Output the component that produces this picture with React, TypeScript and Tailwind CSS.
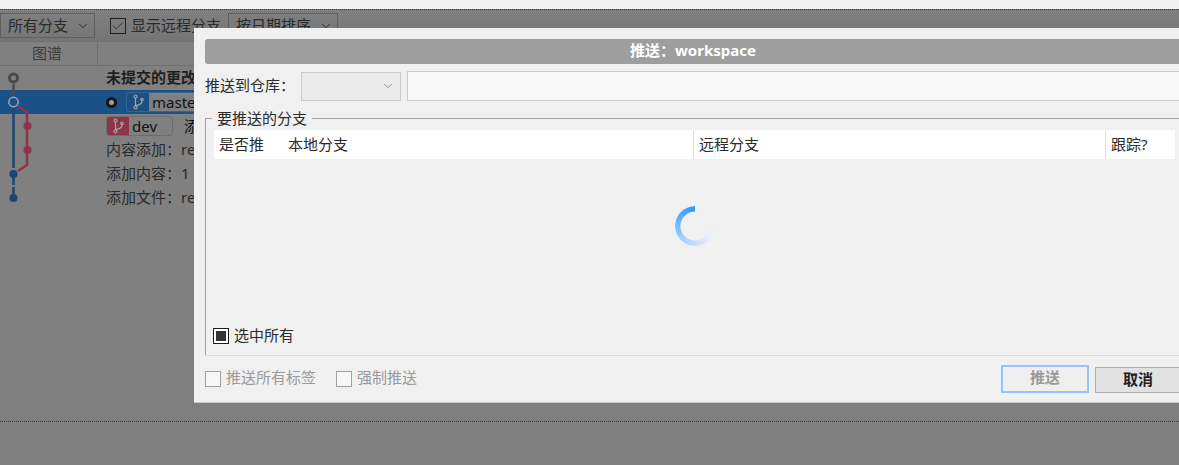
import { Check, ChevronDown } from 'lucide-react';

const font = 'font-["Noto_Sans","Noto_Sans_CJK_SC",sans-serif]';

const BranchIcon = () => (
  <svg width="14" height="16" viewBox="0 0 14 16" fill="none" stroke="#a8a8a8" strokeWidth="1.2">
    <circle cx="4.5" cy="2.5" r="1.5" />
    <circle cx="4.5" cy="13.5" r="1.5" />
    <circle cx="11" cy="5.5" r="1.2" />
    <path d="M4.5 4V12M5 11.5C9 11 11 9.5 11 6.8" />
  </svg>
);

const Graph = () => (
  <svg width="40" height="144" viewBox="0 0 40 144" fill="none" className="shrink-0">
    <path d="M13.5 18V30" stroke="#4d4d4d" strokeWidth="2.5" />
    <path d="M13.5 42V102" stroke="#1a4670" strokeWidth="2.5" />
    <path d="M13.5 112V128" stroke="#1a4670" strokeWidth="2.5" strokeDasharray="7 2" />
    <path d="M18 40L27 46V99L18 105" stroke="#8f3349" strokeWidth="2.5" />
    <circle cx="13.5" cy="12" r="4" stroke="#4a4a4a" strokeWidth="3" fill="#808080" />
    <circle cx="13.5" cy="36" r="4.7" stroke="#a9a9a9" strokeWidth="1.5" fill="#1a5186" />
    <circle cx="27.5" cy="60" r="4" fill="#8f3349" />
    <circle cx="27.5" cy="84" r="4" fill="#8f3349" />
    <circle cx="13.5" cy="108" r="4" fill="#1a4670" />
    <circle cx="13.5" cy="132" r="4" fill="#1a4670" />
  </svg>
);

const Background = () => (
  <div className="flex flex-col h-full">
    <div className="h-[9px] bg-[#f2f2f2] shrink-0" />
    <div className="h-[32px] shrink-0 flex items-center border-t border-dotted border-[#3f3f3f] bg-gradient-to-b from-[#808080] to-[#757575] text-[#2a2a2a] text-[15px]">
      <div className="w-[95px] h-[25px] border border-[#5f5f5f] flex items-center pl-[7px] gap-[8px] whitespace-nowrap">
        所有分支
        <ChevronDown size={14} strokeWidth={1.6} />
      </div>
      <div className="ml-[15px] w-[16px] h-[16px] border border-[#1f1f1f] flex items-center justify-center">
        <Check size={14} strokeWidth={1.4} />
      </div>
      <span className="ml-[5px] whitespace-nowrap">显示远程分支</span>
      <div className="ml-[7px] w-[110px] h-[25px] border border-[#5f5f5f] flex items-center pl-[7px] gap-[8px] whitespace-nowrap">
        按日期排序
        <ChevronDown size={14} strokeWidth={1.6} />
      </div>
    </div>
    <div className="h-[25px] shrink-0 border-t border-b border-[#707070] flex text-[15px] text-[#3c3c3c]">
      <div className="w-[98px] border-r border-[#707070] flex items-center justify-center pr-[3px]">图谱</div>
    </div>
    <div className="relative h-[144px] shrink-0 text-[15px] text-[#2a2a2a]">
      <div className="absolute left-0 right-0 top-[24px] h-[24px] bg-[#1a5186]" />
      <div className="absolute left-0 top-0">
        <Graph />
      </div>
      <div className="relative pl-[106px] flex flex-col">
        <div className="h-[24px] flex items-center pb-[1px] font-bold text-[#1e1e1e] whitespace-nowrap">未提交的更改</div>
        <div className="h-[24px] flex items-center text-[#101010]">
          <span className="w-[11px] h-[11px] rounded-full border-[3px] border-[#161616] bg-[#a0a0a0]" />
          <span className="ml-[9px] w-[200px] h-[20px] flex items-center rounded-[3px] border border-[#356495] bg-[#808080]">
            <span className="w-[22px] h-[18px] bg-[#1d4f80] flex items-center justify-center rounded-l-[2px]">
              <BranchIcon />
            </span>
            <span className="ml-[3px]">master</span>
          </span>
        </div>
        <div className="h-[24px] flex items-center text-[#101010]">
          <span className="w-[67px] h-[20px] flex items-center rounded-[3px] border border-[#6d6d6d] bg-[#808080]">
            <span className="w-[22px] h-[18px] bg-[#8f3349] flex items-center justify-center rounded-l-[2px]">
              <BranchIcon />
            </span>
            <span className="ml-[3px]">dev</span>
          </span>
          <span className="ml-[11px]">添</span>
        </div>
        <div className="h-[24px] flex items-center pb-[2px] whitespace-nowrap">内容添加：re</div>
        <div className="h-[24px] flex items-center pb-[2px] whitespace-nowrap">添加内容：1</div>
        <div className="h-[24px] flex items-center pb-[2px] whitespace-nowrap">添加文件：re</div>
      </div>
    </div>
    <div className="mt-[211px] shrink-0 border-t border-dotted border-[#3f3f3f]" />
  </div>
);

const Spinner = () => (
  <div className="w-[40px] h-[40px] rounded-full bg-[conic-gradient(from_20deg,#f0f0f0_0deg,#f0f0f0_70deg,#e4eefb_110deg,#a9d2fb_200deg,#5caefc_280deg,#2f95fb_340deg,#f0f0f0_341deg)] [mask:radial-gradient(circle,transparent_14px,black_15px)]" />
);

const Dialog = () => (
  <div className="absolute left-[194px] top-[28px] w-[998px] h-[375px] bg-[#f0f0f0] border-b border-[#c8c8c8] flex flex-col px-[11px] pt-[11px] text-[15px] text-[#2b2b2b]">
    <div className="h-[25px] shrink-0 bg-[#9e9e9e] rounded-[3px] flex items-center justify-center text-white font-bold pb-[2px]">
      推送：workspace
    </div>
    <div className="h-[30px] mt-[7px] shrink-0 flex items-center">
      <span className="w-[96px] pb-[2px] whitespace-nowrap">推送到仓库：</span>
      <div className="w-[100px] h-[29px] border border-[#cbcbcb] bg-[#ebebeb] flex items-center justify-end pr-[5px]">
        <ChevronDown size={14} strokeWidth={1.6} className="text-[#8a8a8a]" />
      </div>
      <div className="ml-[6px] flex-1 h-[30px] border-y border-l border-[#cbcbcb] bg-[#f8f8f8]" />
    </div>
    <div className="relative mt-[17px] h-[237px] shrink-0 border-t border-l border-[#a3a3a3] flex flex-col pl-[8px] pt-[11px]">
      <span className="absolute left-[6px] top-[-11px] px-[5px] bg-[#f0f0f0] leading-[20px] whitespace-nowrap">要推送的分支</span>
      <div className="h-[29px] w-[961px] shrink-0 bg-white flex items-center">
        <span className="w-[74px] pl-[5px] pb-[1px] whitespace-nowrap">是否推</span>
        <span className="w-[405px] pb-[1px]">本地分支</span>
        <span className="w-[412px] h-full flex items-center pl-[5px] pb-[1px] border-l border-[#e0e0e0]">远程分支</span>
        <span className="flex-1 h-full flex items-center pl-[5px] pb-[1px] border-l border-[#e0e0e0]">跟踪?</span>
      </div>
      <div className="flex-1 flex items-center justify-center w-[961px] pb-[63px]">
        <Spinner />
      </div>
      <div className="absolute left-[7px] top-[205px] flex items-center gap-[5px]">
        <span className="w-[16px] h-[16px] border border-[#1c1c1c] bg-white flex items-center justify-center">
          <span className="w-[10px] h-[10px] bg-[#333333]" />
        </span>
        <span className="pb-[1px]">选中所有</span>
      </div>
    </div>
    <div className="flex items-center h-[46px] shrink-0 border-t border-[#dcdcdc] text-[#9a9a9a]">
      <span className="w-[16px] h-[16px] border border-[#a0a0a0] bg-[#f7f7f7]" />
      <span className="ml-[5px] pb-[3px]">推送所有标签</span>
      <span className="ml-[20px] w-[16px] h-[16px] border border-[#a0a0a0] bg-[#f7f7f7]" />
      <span className="ml-[5px] pb-[3px]">强制推送</span>
      <div className="ml-auto w-[88px] h-[28px] border-2 border-[#91c6fb] bg-[#efefef] flex items-center justify-center font-bold pb-[2px]">
        推送
      </div>
      <div className="ml-[6px] mr-[-14px] mt-[2px] w-[100px] h-[26px] border border-[#adadad] bg-[#e1e1e1] flex items-center justify-center pr-[14px] font-bold text-[#202020]">
        取消
      </div>
    </div>
  </div>
);

export default function App() {
  return (
    <div className={`relative w-[1179px] h-[465px] overflow-hidden bg-[#808080] ${font}`}>
      <Background />
      <Dialog />
    </div>
  );
}
